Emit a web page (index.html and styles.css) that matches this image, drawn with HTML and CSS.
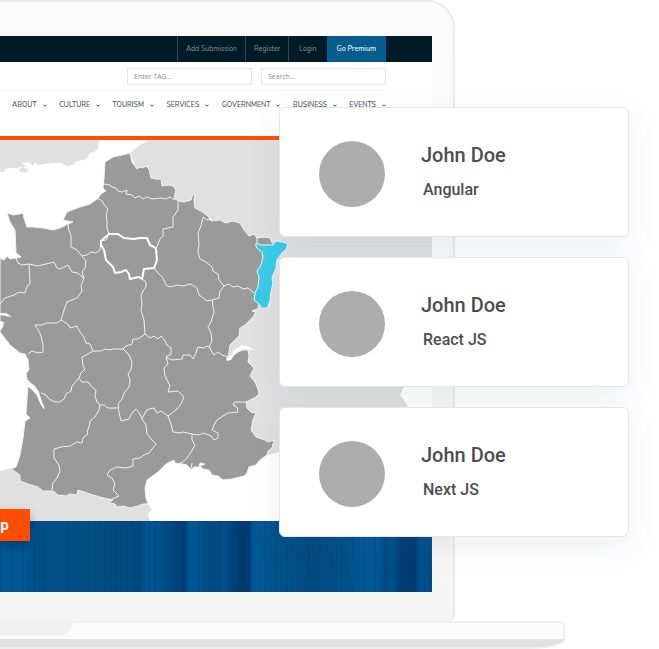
FILE: index.html
```
<!DOCTYPE html>
<html lang="en">
<head>
<meta charset="utf-8">
<meta name="viewport" content="width=device-width, initial-scale=1">
<title>Developers</title>
<link rel="stylesheet" href="styles.css">
</head>
<body>
<main class="scene">
  <div class="laptop">
    <div class="lid">
      <div class="screen">
        <div class="topbar">
          <a href="#">Add Submission</a>
          <a href="#">Register</a>
          <a href="#">Login</a>
          <a href="#" class="premium">Go Premium</a>
        </div>
        <form class="search">
          <input type="text" placeholder="Enter TAG..." aria-label="Enter tag">
          <input type="text" placeholder="Search..." aria-label="Search">
        </form>
        <nav class="menu">
          <a href="#">ABOUT <svg viewBox="0 0 4 3"><path d="M.5.7 2 2.2 3.5.7"/></svg></a>
          <a href="#">CULTURE <svg viewBox="0 0 4 3"><path d="M.5.7 2 2.2 3.5.7"/></svg></a>
          <a href="#">TOURISM <svg viewBox="0 0 4 3"><path d="M.5.7 2 2.2 3.5.7"/></svg></a>
          <a href="#">SERVICES <svg viewBox="0 0 4 3"><path d="M.5.7 2 2.2 3.5.7"/></svg></a>
          <a href="#">GOVERNMENT <svg viewBox="0 0 4 3"><path d="M.5.7 2 2.2 3.5.7"/></svg></a>
          <a href="#">BUSINESS <svg viewBox="0 0 4 3"><path d="M.5.7 2 2.2 3.5.7"/></svg></a>
          <a href="#">EVENTS <svg viewBox="0 0 4 3"><path d="M.5.7 2 2.2 3.5.7"/></svg></a>
        </nav>
        <svg class="map" viewBox="0 140 432 381" aria-hidden="true">
          <g class="abroad">
            <path d="M0 140H99L98 149 94 152 90 153 87 158 83 160 77 161 72 165 67 166 61 163 53 163 45 164 38 165 35 162 33 166 29 162 24 163 20 160 24 165 27 166 22 167 15 168 10 168 5 169 4 172 0 172Z"/>
            <path d="M18 170 23 167 29 170 25 173 21 172Z"/>
            <path d="M130 153 140 145 150 140H432V387H404L400 395 404 400 408 407 340 430 279 452 272 454 240 460 200 300 150 200Z"/>
            <path d="M0 471 11 468 60 460 148 504 152 510 148 514 150 521H0Z"/>
          </g>
          <path class="land" d="M105 162 113 157 122 155 130 153 132 162 135 166 137 169 140 167 143 168 146 166 149 169 151 178 156 179 161 179 162 186 168 185 173 186 176 190 174 198 178 201 184 202 191 200 193 194 195 194 194 200 195 208 201 211 205 214 208 216 211 221 220 220 226 223 233 221 240 223 244 230 249 236 254 234 257 238 264 237 270 238 272 243 288 244 282 254 277 262 272 280 269 308 260 305 258 305 259 308 252 311 256 312 252 318 245 325 240 328 239 336 234 341 230 345 229 352 228 358 233 356 238 352 243 350 248 350 249 356 248 362 254 368 250 376 255 382 258 389 259 394 256 397 246 402 247 408 251 412 256 413 253 420 251 430 256 437 265 440 268 442 274 440 272 448 268 451 267 455 260 460 256 465 249 467 247 473 244 476 232 479 223 480 218 476 212 475 209 470 203 469 200 466 205 464 200 463 199 467 194 467 191 470 187 465 182 464 175 463 174 460 166 464 158 472 147 480 145 488 146 498 148 504 143 504 138 506 130 508 123 506 117 507 115 504 109 503 113 500 108 499 100 497 90 494 78 490 77 495 70 494 66 496 58 495 53 491 43 491 38 487 28 484 20 481 20 475 11 469 16 467 20 455 23 438 25 421 30 418 26 414 28 385 26 373 29 370 28 360 25 354 20 353 10 345 4 337 0 332V258L4 260 7 256 10 259 21 257 16 253 15 230 10 222 7 213 13 215 19 214 23 213 24 218 27 227 33 227 43 228 53 230 60 228 68 224 73 222 63 220 67 212 80 207 90 204 97 199 102 193 106 191 103 188 104 178Z"/>
          <g class="water">
            <path d="M27 379 31 383 35 386 39 392 42 402 45 409 43 408 40 403 36 394 31 389 28 387Z"/>
            <path d="M0 313 6 313 12 317 5 316 0 315ZM0 321 4 322 3 327 0 331ZM21 365 27 367 28 373 24 370Z"/>
            <path d="M226 358 231 356 234 350 242 345 248 346 254 350 243 349 236 352 231 360 227 361Z"/>
          </g>
          <g class="borders">
            <path d="M104 184 110 185 112 187 116 188 118 191 122 192 127 190 126 194 132 195 135 198 139 196 143 199 147 197 152 199 161 198 166 199 170 197 175 200"/>
            <path d="M97 198 102 201 105 206 108 209 106 214 107 222 107 228 109 234 106 240 101 241 100 250 96 253 91 252 87 255 82 256 77 250 71 247 71 235 69 231 68 224"/>
            <path d="M178 202 178 210 173 217 173 227 163 229 163 236 160 239 156 249"/>
            <path d="M208 216 211 219 207 220 203 217 201 226 198 233 199 244 198 252 200 259 206 262 212 267 213 271 218 274 219 280 224 286"/>
            <path d="M154 268 158 273 163 278 166 285 170 287 178 285 183 286 190 284 194 286 197 288 199 295 202 297 207 301 212 300 219 298 220 291 224 286 229 284 233 287 238 286 243 289 248 288 254 293"/>
            <path d="M212 300 214 312 211 322 208 327 211 333 212 341 209 347 214 355 218 352 222 355 228 357"/>
            <path d="M142 279 146 282 146 287 143 291 141 296 142 304 141 310 144 320 145 334 150 338 154 336 158 339 161 336 165 341 167 345 171 348 171 354 166 357 172 360 182 359 183 355 190 355 193 359 196 353 198 347 203 348 208 346 211 349"/>
            <path d="M166 357 168 364 164 368 165 376 170 386 168 392 178 391 184 397 181 404 176 410 168 416"/>
            <path d="M145 334 138 339 133 339 132 344 126 346 123 349 117 349 113 349 109 350 105 349 101 351 93 351"/>
            <path d="M123 349 129 355 132 362 131 370 128 374 130 380 129 387 124 393 122 399 118 404 119 408"/>
            <path d="M82 256 86 261 85 268 82 272 84 278 81 286 82 291 77 298 67 302 64 310 61 320 68 324 70 328 77 326 80 332 84 337 86 343 90 344 93 351"/>
            <path d="M93 351 88 354 82 357 83 366 85 369 81 373 79 378"/>
            <path d="M61 320 57 323 47 323 42 325 35 325 40 333 43 344 43 352 38 353 32 351 28 354"/>
            <path d="M79 378 72 386 71 391 66 394 64 399 60 402 55 402 49 399 46 395 41 393"/>
            <path d="M79 378 82 382 88 382 92 387 96 390 95 396 97 402 100 405 99 410 95 417 90 421 89 427 87 431 88 434 83 438 82 443 77 442 70 446 61 447 54 449 54 458 59 465 60 471 57 478 53 483 52 490"/>
            <path d="M100 405 104 405 108 408 118 408 121 421 129 419 132 413 136 409 140 414 142 419 146 411 149 409 154 408 157 413 161 411 168 416"/>
            <path d="M142 419 146 425 147 434 152 440 156 444 152 449 149 453 144 455 140 458 133 459 133 466 126 468 117 467 110 470 107 475 112 478 115 484 113 490 119 496 112 499"/>
            <path d="M168 416 171 424 173 432 180 433 183 432 192 434 192 440 195 445 191 452 187 458 184 461 179 464"/>
            <path d="M192 434 198 435 204 433 211 436 214 440 218 438 218 433 212 430 214 425 217 420 223 416 228 413 238 412 237 407 233 405 235 402 246 402"/>
            <path d="M16 258 18 263 22 265 29 264 38 266 46 264 54 262 57 268 60 269 68 265 72 272 78 273 83 278M29 264 30 284 27 286 25 293 19 292 14 295 5 298 0 304"/>
            <path d="M257 238 257 243M191 469 192 463"/>
          </g>
          <path class="region" d="M109 234 118 234 124 238 134 239 140 238 147 238 150 245 154 247 156 249 157 260 154 268 144 269 142 279 139 277 130 279 129 274 126 270 121 272 115 273 113 267 106 260 104 250 101 245 101 241Z"/>
          <path class="active" d="M256 243 261 245 273 245 275 241 283 242 288 244 286 249 281 254 277 260 276 268 272 278 273 283 271 292 270 301 267 308 261 308 259 304 254 300 255 293 258 287 259 277 257 271 261 265 263 257 262 252 258 249 256 247Z"/>
        </svg>
        <div class="ground"><button class="map-button" type="button">p</button></div>
      </div>
    </div>
    <div class="base"><div class="notch"></div></div>
    <div class="underside"></div>
  </div>
  <section class="cards">
    <article class="card">
      <div class="avatar"></div>
      <div class="person"><h2>John Doe</h2><p>Angular</p></div>
    </article>
    <article class="card">
      <div class="avatar"></div>
      <div class="person"><h2>John Doe</h2><p>React JS</p></div>
    </article>
    <article class="card">
      <div class="avatar"></div>
      <div class="person"><h2>John Doe</h2><p>Next JS</p></div>
    </article>
  </section>
</main>
</body>
</html>
```
FILE: styles.css
```
* { box-sizing: border-box; }

body {
  margin: 0;
  background: #fff;
  font-family: Roboto, "Liberation Sans", sans-serif;
}

a { color: inherit; text-decoration: none; }

.scene {
  display: grid;
  overflow: hidden;
}

.laptop,
.cards { grid-area: 1 / 1; }

/* Laptop */
.laptop { padding-right: 94px; }

.lid {
  margin-right: 110px;
  padding: 34px 21px 29px 0;
  border: solid #ebebeb;
  border-width: 2px 2px 0 0;
  border-radius: 0 28px 6px 0;
  background: linear-gradient(#fbfbfb, #f5f5f5);
}

.screen {
  background: #fff;
  font-family: Nunito, "Open Sans", "Noto Sans", sans-serif;
}

.base {
  height: 18px;
  border: 2px solid #f0f0f0;
  border-left: 0;
  border-bottom: 0;
  border-radius: 0 4px 2px 0;
  background: #fbfbfb;
}

.notch {
  width: 73px;
  height: 12px;
  border-radius: 0 0 12px 0;
  background: #f0f0f0;
}

.underside {
  height: 10px;
  border-bottom: 2px solid #eee;
  border-radius: 0 0 36px 0 / 0 0 10px 0;
  background: #e1e1e1;
}

/* Site header */
.topbar {
  display: flex;
  justify-content: flex-end;
  height: 26px;
  padding-right: 46px;
  background: #021b29;
  color: #85929a;
  font-size: 7px;
  line-height: 26px;
}

.topbar a {
  padding: 0 8px;
  border-left: 1px solid #34454f;
}

.topbar a:nth-child(3) { padding: 0 10px; }

.topbar .premium {
  padding: 0 10px;
  border-left: 0;
  background: #065d8d;
  color: #e4eef4;
  font-weight: 600;
}

.search {
  display: flex;
  justify-content: flex-end;
  gap: 9px;
  height: 29px;
  margin-right: 46px;
  padding-top: 6px;
  border-bottom: 1px solid #f5f5f5;
}

.search input {
  width: 125px;
  height: 17px;
  padding: 0 6px;
  border: 1px solid #e6e6e6;
  background: #fff;
  font: 7px "Open Sans", sans-serif;
}

.search input::placeholder { color: #8a8a8a; }

.menu {
  display: flex;
  justify-content: space-between;
  height: 45px;
  margin: 0 46px 0 12px;
  color: #505050;
  font-size: 7px;
  font-weight: 500;
  line-height: 28px;
}

.menu a {
  display: flex;
  align-items: center;
  gap: 6px;
  height: 28px;
}

.menu svg {
  width: 4px;
  height: 3px;
  fill: none;
  stroke: #444;
}

/* Map */
.map {
  display: block;
  width: 100%;
  border-top: 4px solid #ff4e00;
}

.abroad { fill: #e0e0e0; }
.land { fill: #9a9a9a; stroke: #f4f4f4; }
.water { fill: #fff; }
.borders { fill: none; stroke: #f2f2f2; stroke-linejoin: round; }
.region { fill: none; stroke: #fff; stroke-width: 2; stroke-linejoin: round; }
.active { fill: #3acbe6; stroke: #e8fafd; }

.ground {
  position: relative;
  height: 71px;
  background:
    repeating-linear-gradient(90deg, #0a2a5522 0 2px, transparent 2px 6px, #00285518 6px 7px, transparent 7px 11px),
    linear-gradient(90deg, #005796 0, #005796 24px, #00508a 36px, #004e84 90px, #00497f 141px, #005593 144px, #005593 150px, #00508c 160px, #003d73 186px, #005796 187px, #005796 195px, #004a80 215px, #00508a 224px, #003a70 240px, #003d73 250px, #005a99 253px, #005590 270px, #004a80 310px, #00508a 345px, #005796 362px, #005796 380px, #004b82 384px, #004f8a 394px, #003f75 400px, #003b70 416px, #00508d 418px, #004f8b 100%);
}

.map-button {
  position: absolute;
  top: -12px;
  left: 0;
  width: 30px;
  height: 32px;
  padding: 0;
  border: 0;
  background: #ff4e00;
  box-shadow: 0 4px 10px #0004;
  color: #fff;
  font: 700 14px/32px "Open Sans", sans-serif;
  text-align: left;
}

/* People */
.cards {
  z-index: 1;
  display: grid;
  align-content: start;
  justify-self: end;
  gap: 20px;
  width: 350px;
  margin: 107px 30px 0 0;
}

.card {
  display: flex;
  align-items: center;
  gap: 36px;
  min-height: 130px;
  padding: 0 39px;
  border: 1px solid #e6e6e6;
  border-radius: 6px;
  background: #fff;
  box-shadow: 0 10px 30px rgba(90, 100, 170, 0.1);
}

.avatar {
  flex: none;
  width: 66px;
  height: 66px;
  margin-top: 4px;
  border-radius: 50%;
  background: #adadad;
}

.person {
  display: grid;
  gap: 11px;
  color: #4d4d4d;
}

.person h2,
.person p {
  margin: 0;
  font-size: 20px;
  font-weight: 500;
  line-height: 24px;
}

.person p {
  padding-left: 2px;
  font-size: 16px;
}
```
